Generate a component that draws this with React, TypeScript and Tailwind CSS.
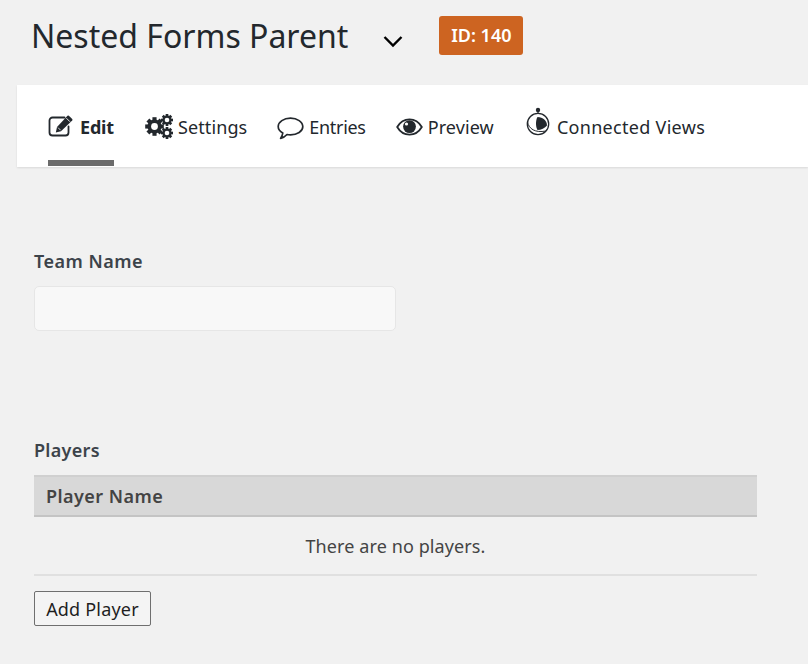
const EditIcon = () => (
  <svg className="mb-[2px]" width="26" height="22" viewBox="0 0 26 22" fill="none">
    <path d="M16.500 2.500H4.500A3 3 0 0 0 1.500 5.500v12a3 3 0 0 0 3 3h13a3 3 0 0 0 3-3v-6" stroke="#23282d" strokeWidth="1.800" strokeLinecap="round" />
    <path d="M19.500 .8a1 1 0 0 1 1.400 0l3.300 3.300a1 1 0 0 1 0 1.400L13 16.200 7.800 17.500l1.200-5.400z" fill="#23282d" />
    <path d="M18.400 3.200l3.500 3.500" stroke="#fff" strokeWidth=".9" />
    <path d="M10 12.600l2.600 2.600" stroke="#fff" strokeWidth=".8" />
  </svg>
);

const Gear = ({ cx, cy, r, ring, hole }: { cx: number; cy: number; r: number; ring: number; hole: number }) => (
  <g>
    {[0, 45, 90, 135].map((deg) => (
      <rect key={deg} x={cx - r / 4.500} y={cy - r} width={r / 2.250} height={r * 2} fill="#23282d" transform={`rotate(${deg} ${cx} ${cy})`} />
    ))}
    <circle cx={cx} cy={cy} r={ring} fill="#23282d" />
    <circle cx={cx} cy={cy} r={hole} fill="#fff" />
  </g>
);

const GearsIcon = () => (
  <svg className="mb-[2px]" width="29" height="26" viewBox="0 0 29 26">
    <Gear cx={9.500} cy={13.500} r={9.300} ring={7} hole={3.400} />
    <Gear cx={22} cy={7} r={6} ring={4.500} hole={2.300} />
    <Gear cx={22} cy={20} r={6} ring={4.500} hole={2.300} />
  </svg>
);

const ChatIcon = () => (
  <svg className="mt-[2px]" width="27" height="23" viewBox="0 0 27 23" fill="none">
    <path
      d="M13.500 1.200C6.800 1.200 1.200 4.800 1.200 9.600c0 2.800 1.900 5 4.600 6.400-.2 1.800-1 3.600-2.200 5.400 2.800-.8 5-2.300 6.400-3.900 1.100.2 2.300.3 3.500.3 6.700 0 12.300-3.500 12.300-8C25.800 4.800 20.200 1.200 13.500 1.200z"
      stroke="#23282d"
      strokeWidth="1.700"
      strokeLinejoin="round"
    />
  </svg>
);

const EyeIcon = () => (
  <svg width="27" height="18" viewBox="0 0 27 18" fill="none">
    <path d="M1.200 9C4 4.200 8.400 1.400 13.500 1.400S23 4.200 25.800 9C23 13.800 18.600 16.600 13.500 16.600S4 13.800 1.200 9z" stroke="#23282d" strokeWidth="1.800" />
    <circle cx="13.500" cy="8.600" r="6.400" fill="#23282d" />
    <circle cx="10.500" cy="6" r="1.600" fill="#fff" />
  </svg>
);

const ViewsIcon = () => (
  <svg className="mb-[10px]" width="27" height="30" viewBox="0 0 27 30" fill="none">
    <circle cx="13" cy="3" r="2.200" fill="#23282d" />
    <path d="M13 5v2" stroke="#23282d" strokeWidth="1.200" />
    <circle cx="13" cy="17" r="10.700" stroke="#23282d" strokeWidth="1.300" />
    <path d="M12.500 10C18 10 22 14 22 18.500 20 21 16 23 12.500 23 10.500 20 10.500 13 12.500 10z" fill="#23282d" />
    <path d="M2.500 15C4 22 10 26 21 24" stroke="#23282d" strokeWidth="1" />
  </svg>
);

const tabs = [
  { label: 'Settings', icon: <GearsIcon />, text: 'gap-[4px] tracking-[0.1px]' },
  { label: 'Entries', icon: <ChatIcon />, text: 'gap-[5px] tracking-[-0.3px]' },
  { label: 'Preview', icon: <EyeIcon />, text: 'gap-[5px] tracking-[0.1px]' },
  { label: 'Connected Views', icon: <ViewsIcon />, text: 'ml-[1px] gap-[5px] tracking-[0.3px]' },
];

export default function App() {
  return (
    <div className="min-h-[664px] w-[808px] overflow-hidden bg-[#f1f1f1] font-['Noto_Sans','Open_Sans',sans-serif] text-[#23282d]">
      <div className="flex h-[85px] items-start pl-[31px] pt-[16px]">
        <h1 className="text-[32px] leading-[40px] font-normal">Nested Forms Parent</h1>
        <svg className="ml-[35px] mt-[19px]" width="20" height="13" viewBox="0 0 20 13" fill="none">
          <path d="M1.500 2l8.500 8.500L18.500 2" stroke="#000" strokeWidth="2.400" />
        </svg>
        <span className="ml-[36px] flex h-[39px] w-[84px] items-center justify-center rounded-[3px] bg-[#cd6421] text-[18px] font-semibold text-white">
          ID: 140
        </span>
      </div>

      <nav className="ml-[17px] flex h-[82px] items-start gap-[30px] bg-white pl-[31px] shadow-[0_1px_2px_rgba(0,0,0,0.1)]">
        <a className="mr-[1px] flex h-[81px] w-[66px] items-center gap-[6px] border-b-[6px] border-[#6b6b6b] pt-[9px] text-[18px] font-bold tracking-[-0.2px]">
          <EditIcon />
          Edit
        </a>
        {tabs.map((tab) => (
          <a key={tab.label} className={`flex h-[82px] items-center pt-[2px] text-[18px] ${tab.text}`}>
            {tab.icon}
            {tab.label}
          </a>
        ))}
      </nav>

      <form className="pl-[34px] pr-[51px]">
        <label className="mt-[81px] block text-[18px] leading-[26px] font-semibold tracking-[0.5px] text-[#3c434a]">Team Name</label>
        <input className="mt-[12px] block h-[45px] w-[362px] rounded-[5px] border border-[#e6e6e6] bg-[#f8f8f8]" />

        <h2 className="mt-[106px] text-[18px] leading-[26px] font-semibold tracking-[0.3px] text-[#3c434a]">Players</h2>
        <div className="mt-[12px] flex h-[42px] items-center border-t-2 border-b-2 border-t-[#d0d0d0] border-b-[#c4c4c4] bg-[#d8d8d8] pl-[12px] text-[18px] font-semibold tracking-[0.45px] text-[#444444]">
          Player Name
        </div>
        <div className="flex h-[59px] items-center justify-center border-b-2 border-[#e0e0e0] pt-[2px] text-[18px] tracking-[0.1px] text-[#444444]">
          There are no players.
        </div>
        <button type="button" className="mt-[15px] block h-[35px] w-[117px] rounded-[2px] border border-[#6f6f6f] bg-[#f4f4f4] pt-[2px] text-[18px] tracking-[0.2px] text-[#1f1f1f]">
          Add Player
        </button>
      </form>
    </div>
  );
}
